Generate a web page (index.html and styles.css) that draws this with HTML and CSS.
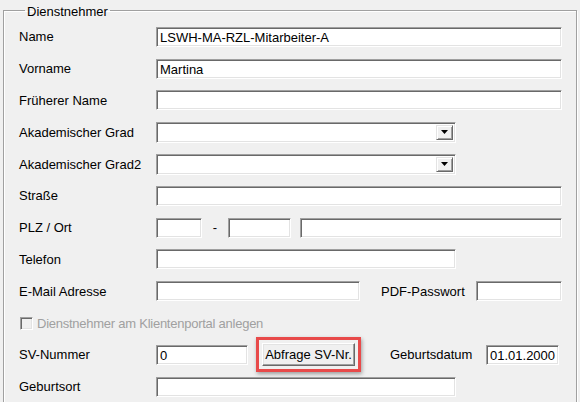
FILE: index.html
```html
<!DOCTYPE html>
<html lang="de">
<head>
<meta charset="utf-8">
<link rel="stylesheet" href="styles.css">
</head>
<body>
<fieldset class="group">
  <legend class="group-title">Dienstnehmer</legend>
  <div class="row">
    <span class="label">Name</span>
    <span class="field w406">LSWH-MA-RZL-Mitarbeiter-A</span>
  </div>
  <div class="row">
    <span class="label">Vorname</span>
    <span class="field w406">Martina</span>
  </div>
  <div class="row">
    <span class="label">Früherer Name</span>
    <span class="field w406"></span>
  </div>
  <div class="row">
    <span class="label">Akademischer Grad</span>
    <span class="field combo w300"><span class="drop"><svg width="7" height="4" viewBox="0 0 7 4"><path d="M0 0H7L3.5 4Z" fill="#000"/></svg></span></span>
  </div>
  <div class="row">
    <span class="label">Akademischer Grad2</span>
    <span class="field combo w300"><span class="drop"><svg width="7" height="4" viewBox="0 0 7 4"><path d="M0 0H7L3.5 4Z" fill="#000"/></svg></span></span>
  </div>
  <div class="row">
    <span class="label">Straße</span>
    <span class="field w406"></span>
  </div>
  <div class="row">
    <span class="label">PLZ / Ort</span>
    <span class="field w46"></span>
    <span class="dash">-</span>
    <span class="field w63"></span>
    <span class="field w262 ml9"></span>
  </div>
  <div class="row">
    <span class="label">Telefon</span>
    <span class="field w300"></span>
  </div>
  <div class="row">
    <span class="label">E-Mail Adresse</span>
    <span class="field w204"></span>
    <span class="label-inline pdf">PDF-Passwort</span>
    <span class="field w86"></span>
  </div>
  <div class="row check-row">
    <span class="checkbox"></span>
    <span class="check-label">Dienstnehmer am Klientenportal anlegen</span>
  </div>
  <div class="row">
    <span class="label">SV-Nummer</span>
    <span class="field w92">0</span>
    <span class="highlight"><span class="button">Abfrage SV-Nr.</span></span>
    <span class="label-inline geb">Geburtsdatum</span>
    <span class="field w73">01.01.2000</span>
  </div>
  <div class="row">
    <span class="label">Geburtsort</span>
    <span class="field w300"></span>
  </div>
</fieldset>
</body>
</html>
```
FILE: styles.css
```css
html, body {
  margin: 0;
  padding: 0;
  background: #f0f0f0;
}
body {
  font-family: "Liberation Sans", Arial, sans-serif;
  font-size: 13px;
  color: #000;
  width: 580px;
  height: 402px;
  overflow: hidden;
}
.group {
  margin: 3px 0 0 3px;
  width: 574px;
  height: 420px;
  box-sizing: border-box;
  border: 1px solid #a0a0a0;
  box-shadow: inset 1px 1px #fff, 1px 1px #fff;
  padding: 3px 0 0 15px;
}
.group-title {
  padding: 0 2px;
  margin-left: 6px;
  line-height: 15px;
  position: relative;
  top: 1px;
}
.row {
  height: 31.8px;
  display: flex;
  align-items: center;
}
.label {
  width: 137px;
  flex: none;
}
.field {
  display: block;
  flex: none;
  box-sizing: border-box;
  height: 20px;
  background: #fff;
  border: 1px solid;
  border-color: #a0a0a0 #fff #fff #a0a0a0;
  box-shadow: inset 1px 1px #696969, inset -1px -1px #e3e3e3;
  padding: 2px 3px 0 3px;
  line-height: 15px;
  white-space: nowrap;
  overflow: hidden;
  position: relative;
}
.combo {
  height: 21px;
}
.drop {
  position: absolute;
  right: 2px;
  top: 2px;
  bottom: 2px;
  width: 17px;
  box-sizing: border-box;
  background: #f0f0f0;
  border: 1px solid;
  border-color: #e3e3e3 #696969 #696969 #e3e3e3;
  box-shadow: inset 1px 1px #fff, inset -1px -1px #a0a0a0;
  display: flex;
  align-items: center;
  justify-content: center;
}
.w406 { width: 406px; }
.w300 { width: 300px; }
.w46 { width: 46px; }
.w63 { width: 63px; }
.w262 { width: 262px; }
.w204 { width: 204px; }
.w86 { width: 86px; }
.w92 { width: 92px; }
.w73 { width: 73px; }
.ml9 { margin-left: 9px; }
.dash {
  width: 26px;
  text-align: center;
  flex: none;
}
.label-inline {
  flex: none;
}
.pdf {
  margin-left: 21px;
  width: 95px;
}
.geb {
  margin-left: 29px;
  width: 96px;
}
.check-row {
  padding-left: 1px;
}
.checkbox {
  width: 13px;
  height: 13px;
  box-sizing: border-box;
  border: 1px solid;
  border-color: #a0a0a0 #fff #fff #a0a0a0;
  box-shadow: inset 1px 1px #696969, inset -1px -1px #e3e3e3;
  background: #f0f0f0;
  flex: none;
}
.check-label {
  margin-left: 4px;
  color: #a0a0a0;
  letter-spacing: -0.25px;
}
.highlight {
  flex: none;
  margin-left: 8px;
  border: 3px solid #e84a4a;
  padding: 3px;
  box-shadow: 1px 2px 4px rgba(0, 0, 0, 0.35);
  display: flex;
}
.button {
  display: block;
  box-sizing: border-box;
  width: 93px;
  height: 23px;
  background: #f0f0f0;
  border: 1px solid;
  border-color: #fff #696969 #696969 #fff;
  box-shadow: inset -1px -1px #a0a0a0, inset 1px 1px #e3e3e3;
  text-align: center;
  line-height: 21px;
}
```
